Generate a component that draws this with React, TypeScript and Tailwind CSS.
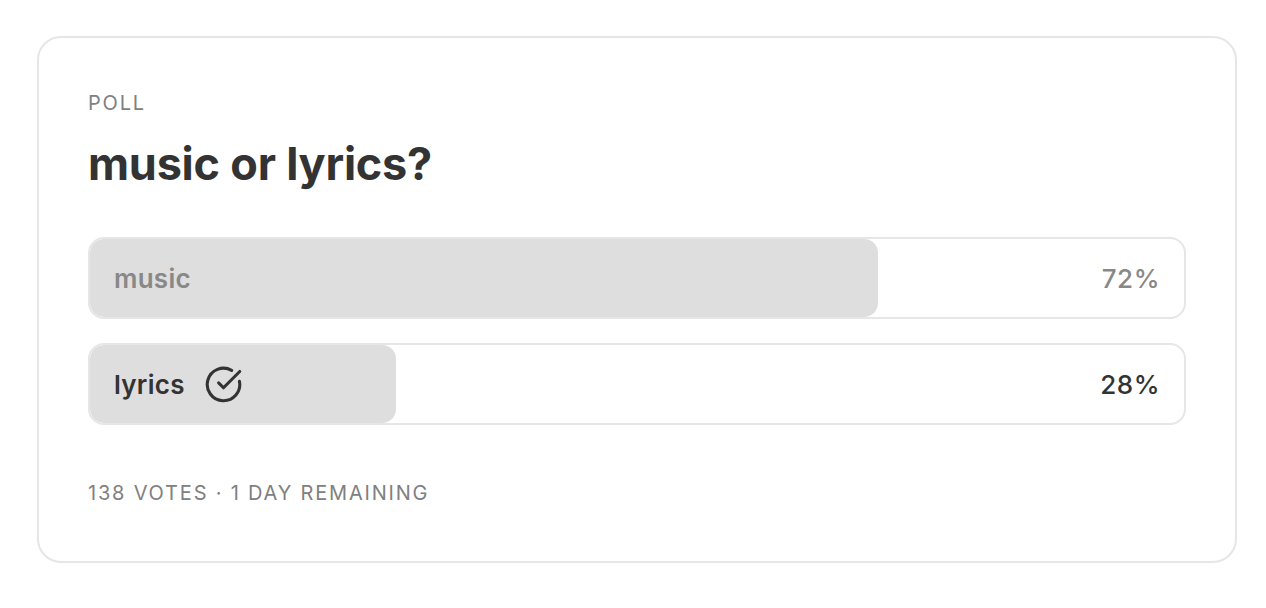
import { CircleCheckBig } from 'lucide-react';

const options = [
  { label: 'music', pct: 72, voted: false },
  { label: 'lyrics', pct: 28, voted: true },
];

export default function App() {
  return (
    <div className="min-h-[608px] bg-white pt-[36px] px-[37px] font-['Inter',sans-serif]">
      <div className="w-[1200px] h-[527px] rounded-[24px] border-2 border-[#e6e6e6] px-[49px] pt-[53px]">
        <div className="text-[20px] leading-[24px] tracking-[0.09em] text-[#808080] uppercase">Poll</div>
        <h1 className="mt-[23px] text-[45px] leading-[52px] font-bold text-[#333333] tracking-[-0.005em]">
          music or lyrics?
        </h1>

        <div className="mt-[47px] flex flex-col gap-[24px]">
          {options.map((o) => (
            <div
              key={o.label}
              className="relative h-[82px] rounded-[16px] border-2 border-[#e6e6e6] overflow-hidden"
            >
              <div
                className="absolute inset-y-0 left-0 bg-[#dedede] rounded-[14px]"
                style={{ width: `${o.pct}%` }}
              />
              <div className="relative h-full flex items-center justify-between pl-[24px] pr-[24px]">
                <div
                  className={`flex items-center gap-[19px] text-[26px] font-semibold tracking-[0.01em] ${
                    o.voted ? 'text-[#333333]' : 'text-[#888888]'
                  }`}
                >
                  {o.label}
                  {o.voted && <CircleCheckBig size={39} strokeWidth={1.9} className="text-[#333333]" />}
                </div>
                <div
                  className={`text-[26px] font-medium tracking-[0.02em] ${
                    o.voted ? 'text-[#333333]' : 'text-[#888888]'
                  }`}
                >
                  {o.pct}%
                </div>
              </div>
            </div>
          ))}
        </div>

        <div className="mt-[56px] text-[20px] leading-[24px] tracking-[0.09em] text-[#808080] uppercase">
          138 votes · 1 day remaining
        </div>
      </div>
    </div>
  );
}
